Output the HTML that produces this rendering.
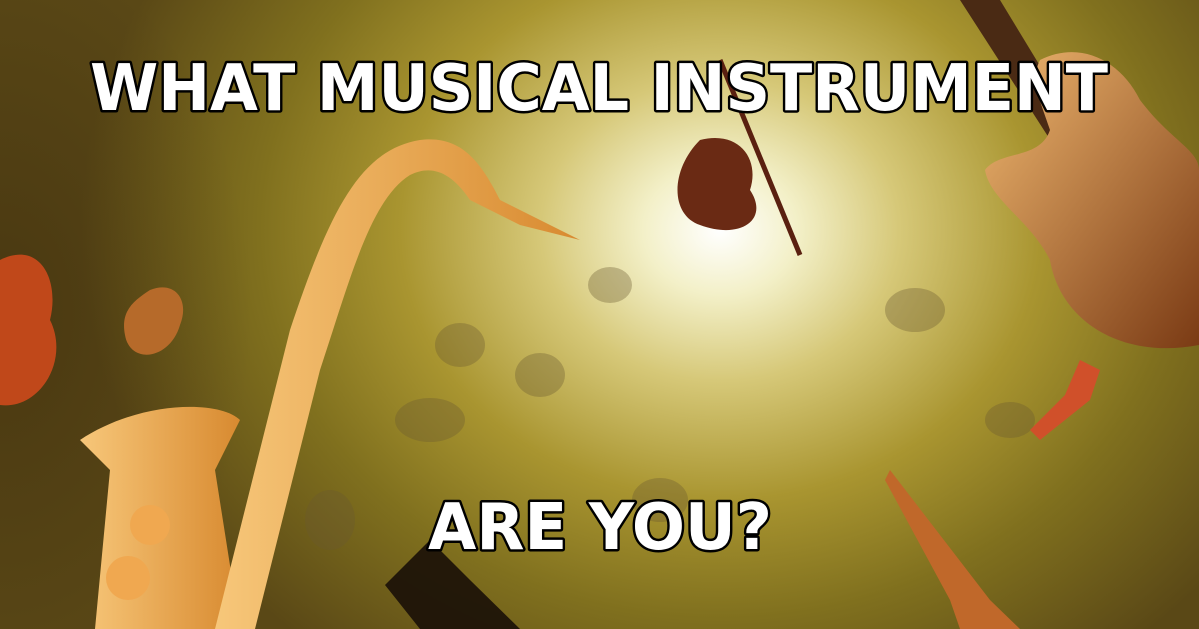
<!DOCTYPE html>
<html><head><meta charset="utf-8"><style>
html,body{margin:0;padding:0;width:1199px;height:629px;overflow:hidden}
body{background:radial-gradient(ellipse 640px 540px at 720px 230px,#ffffff 0%,#f3f0c8 12%,#d6c878 28%,#a99530 50%,#80701e 72%,#5a4816 100%);}
</style></head><body>
<svg width="1199" height="629" viewBox="0 0 1199 629" style="position:absolute;left:0;top:0">
<defs>
<linearGradient id="sax" x1="0" x2="1"><stop offset="0" stop-color="#f7c77a"/><stop offset="1" stop-color="#d88a30"/></linearGradient>
<linearGradient id="gt" x1="0" x2="1" y1="0" y2="1"><stop offset="0" stop-color="#f0b870"/><stop offset="1" stop-color="#7a3a14"/></linearGradient>
<radialGradient id="lg" cx="0" cy="0.5" r="0.6"><stop offset="0" stop-color="#2a1a08" stop-opacity="0.35"/><stop offset="1" stop-color="#2a1a08" stop-opacity="0"/></radialGradient>
</defs>
<rect x="0" y="0" width="420" height="629" fill="url(#lg)"/>
<g fill="#6a5a30" opacity="0.35">
<ellipse cx="610" cy="285" rx="22" ry="18"/><ellipse cx="460" cy="345" rx="25" ry="22"/>
<ellipse cx="540" cy="375" rx="25" ry="22"/><ellipse cx="430" cy="420" rx="35" ry="22"/>
<ellipse cx="915" cy="310" rx="30" ry="22"/><ellipse cx="1010" cy="420" rx="25" ry="18"/>
<ellipse cx="660" cy="500" rx="28" ry="22"/><ellipse cx="330" cy="520" rx="25" ry="30"/>
</g>
<path d="M0 260 C40 240 60 280 50 320 C70 360 40 410 0 405Z" fill="#c0481a"/>
<path d="M150 290 C175 280 190 300 180 325 C170 360 130 365 125 335 C120 310 135 300 150 290Z" fill="#b66a2a"/>
<path d="M95 629 L110 470 L80 440 C140 400 220 400 240 420 L215 470 L240 629Z" fill="url(#sax)"/>
<path d="M215 629 L290 330 C330 210 360 150 420 140 C460 135 480 160 500 200 L580 240 L520 225 L470 200 C450 170 430 165 410 175 C370 200 350 280 320 370 L255 629Z" fill="url(#sax)"/>
<g fill="#f0a850"><circle cx="150" cy="525" r="20"/><circle cx="128" cy="578" r="22"/></g>
<path d="M960 0 L1000 0 L1085 140 L1060 155Z" fill="#4a2a14"/>
<path d="M1040 60 C1080 40 1120 60 1140 100 C1170 140 1199 150 1199 170 L1199 345 C1120 360 1060 320 1050 260 C1030 220 990 200 985 170 C1000 150 1040 160 1050 130 C1040 100 1030 80 1040 60Z" fill="url(#gt)"/>
<path d="M700 140 C740 130 760 160 750 190 C770 220 740 240 700 225 C670 215 670 170 700 140Z" fill="#6a2a14"/>
<path d="M720 60 L800 255" stroke="#5a2010" stroke-width="5"/>
<path d="M385 585 L430 540 L470 580 L520 629 L420 629Z" fill="#1a1008" opacity="0.9"/>
<path d="M1080 360 L1100 370 L1090 400 L1040 440 L1030 430 L1065 395Z" fill="#d0502a"/>
<path d="M890 470 L990 600 L1020 629 L960 629 L950 600 L885 480Z" fill="#c0682a"/>
<g font-family="'DejaVu Sans','Liberation Sans',sans-serif" font-weight="bold" fill="#fff" stroke="#000" stroke-width="5" paint-order="stroke" stroke-linejoin="round">
<text x="90" y="110" font-size="64" textLength="1018" lengthAdjust="spacingAndGlyphs">WHAT MUSICAL INSTRUMENT</text>
<text x="428" y="549" font-size="64" textLength="344" lengthAdjust="spacingAndGlyphs">ARE YOU?</text>
</g>
</svg>
</body></html>
